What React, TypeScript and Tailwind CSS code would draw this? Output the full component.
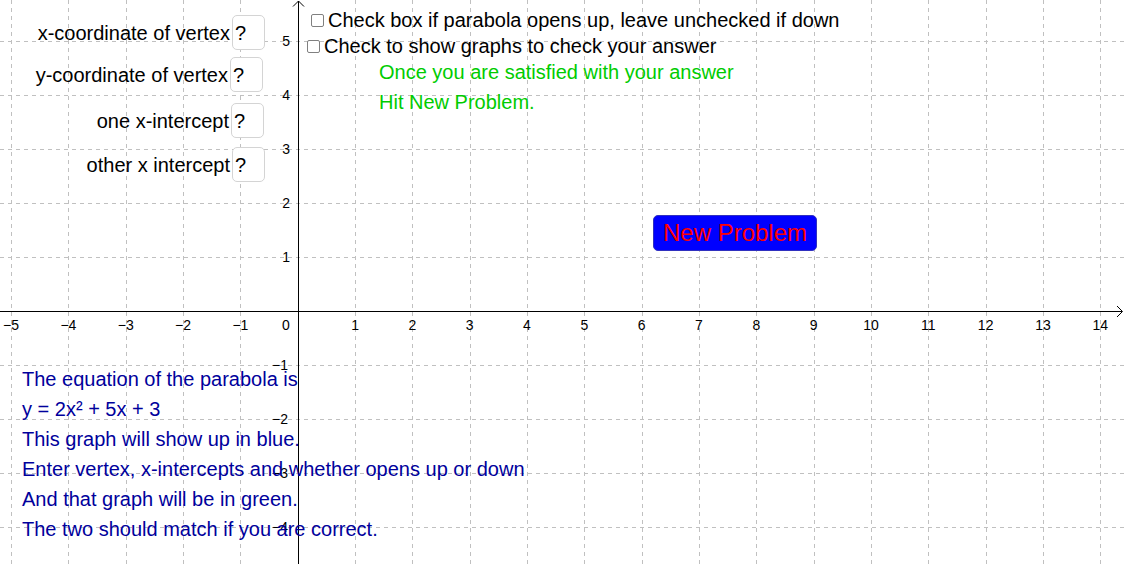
import React from "react";

const X0 = 297.7;
const Y0 = 311.3;
const SX = 57.33;
const SY = 54;

const xs = Array.from({ length: 20 }, (_, i) => i - 5);
const ys = [5, 4, 3, 2, 1, -1, -2, -3, -4];

function px(v: number) {
  return Math.round(v) + 0.5;
}

function Graph() {
  return (
    <svg width={1124} height={564} className="absolute inset-0" fontFamily="'Liberation Sans', Arial, sans-serif">
      {xs.map((k) =>
        k === 0 ? null : (
          <line key={"vx" + k} x1={px(X0 + SX * k)} y1={0} x2={px(X0 + SX * k)} y2={564} stroke="#c0c0c0" strokeDasharray="4 4" />
        )
      )}
      {ys.map((k) => (
        <line key={"hy" + k} x1={0} y1={px(Y0 - SY * k)} x2={1124} y2={px(Y0 - SY * k)} stroke="#c0c0c0" strokeDasharray="4 4" />
      ))}
      {/* axes */}
      <line x1={0} y1={px(Y0)} x2={1122} y2={px(Y0)} stroke="#000" />
      <line x1={px(X0)} y1={1} x2={px(X0)} y2={564} stroke="#000" />
      <polyline points="1117,306 1122.5,311.5 1117,317" fill="none" stroke="#000" />
      <polyline points="293,6.5 298.5,1 304,6.5" fill="none" stroke="#000" />
      {xs.map((k) => (
        <text key={"lx" + k} x={k === 0 ? 286 : X0 + SX * k} y={330} textAnchor="middle" fontSize={14} fill="#000">
          {k < 0 ? "\u2212" + -k : k}
        </text>
      ))}
      {ys.map((k) => (
        <text key={"ly" + k} x={k < 0 ? 288 : 290} y={Y0 - SY * k + 5} textAnchor="end" fontSize={14} fill="#000">
          {k < 0 ? "\u2212" + -k : k}
        </text>
      ))}
    </svg>
  );
}

function InputRow({ label, top, width }: { label: string; top: string; width: string }) {
  return (
    <div className={`absolute left-0 flex items-center justify-end gap-[2px] ${top} ${width}`}>
      <span className="leading-5 whitespace-nowrap">{label}</span>
      <div className="flex h-[35px] w-[33px] items-center rounded-[5px] border border-[#d4d4d4] bg-white pl-[2px]">
        <span className="leading-5">?</span>
      </div>
    </div>
  );
}

export default function App() {
  return (
    <div className="relative h-[564px] w-[1124px] overflow-hidden bg-white font-['Liberation_Sans',Arial,sans-serif] text-[20px] text-black">
      <Graph />

      <InputRow label="x-coordinate of vertex" top="top-[15px]" width="w-[265px]" />
      <InputRow label="y-coordinate of vertex" top="top-[57px]" width="w-[263px]" />
      <InputRow label="one x-intercept" top="top-[103px]" width="w-[264px]" />
      <InputRow label="other x intercept" top="top-[147px]" width="w-[265px]" />

      <label className="absolute left-[311px] top-[10px] flex items-center gap-[4px]">
        <span className="h-[13px] w-[13px] rounded-[2px] border-[1.5px] border-[#808080] bg-white" />
        <span className="leading-5 whitespace-nowrap">Check box if parabola opens up, leave unchecked if down</span>
      </label>
      <label className="absolute left-[307px] top-[36px] flex items-center gap-[4px]">
        <span className="h-[13px] w-[13px] rounded-[2px] border-[1.5px] border-[#808080] bg-white" />
        <span className="leading-5 whitespace-nowrap">Check to show graphs to check your answer</span>
      </label>

      <div className="absolute left-[379px] top-[57px] leading-[30px] text-[#00cc00]">
        <p>Once you are satisfied with your answer</p>
        <p>Hit New Problem.</p>
      </div>

      <button className="absolute left-[653px] top-[215px] flex h-[36px] w-[164px] items-center justify-center rounded-[5px] border border-[#3030c0] bg-[#0000ff] text-[24px] leading-6 text-[#ff0000]">
        New Problem
      </button>

      <div className="absolute left-[22px] top-[364px] leading-[30px] text-[#00009c]">
        <p>The equation of the parabola is</p>
        <p>y = 2x² + 5x + 3</p>
        <p>This graph will show up in blue.</p>
        <p>Enter vertex, x-intercepts and whether opens up or down</p>
        <p>And that graph will be in green.</p>
        <p>The two should match if you are correct.</p>
      </div>
    </div>
  );
}
